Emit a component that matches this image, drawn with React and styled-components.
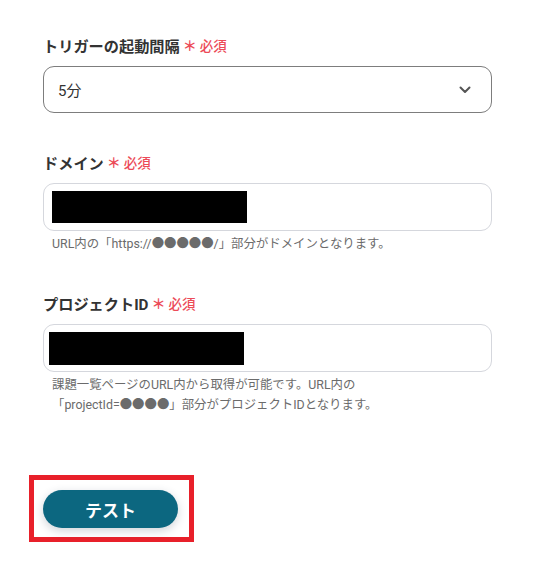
import React from "react";
import styled, { createGlobalStyle } from "styled-components";

const GlobalStyle = createGlobalStyle`
    body {
        margin: 0;
        background: #ffffff;
        font-family: Roboto, 'Noto Sans CJK JP', sans-serif;
    }
`

const Page = styled.div`
    width: 544px;
    height: 571px;
    box-sizing: border-box;
    padding: 34px 52px 0 43px;
    display: flex;
    flex-direction: column;
`

const Field = styled.div`
    display: flex;
    flex-direction: column;
    margin-bottom: ${props => props.gap}px;
`

const Label = styled.div`
    display: flex;
    align-items: center;
    height: 22px;
    margin-bottom: 10px;
    font-size: 15.2px;
    font-weight: 700;
    color: #333333;
    span{
        margin-left: 3px;
        font-size: 13.5px;
        font-weight: 500;
        color: #ec4b58;
    }
    b{
        font-size: 14px;
        font-weight: 700;
        margin-right: 3px;
    }
`

const Select = styled.div`
    height: 47px;
    box-sizing: border-box;
    border: 1px solid #7d7d7d;
    border-radius: 11px;
    display: flex;
    align-items: center;
    justify-content: space-between;
    padding: 0 20px 0 14px;
    font-size: 15px;
    color: #333333;
`

const Input = styled.div`
    height: 48px;
    box-sizing: border-box;
    border: 1px solid #d5d7dd;
    border-radius: 11px;
    display: flex;
    align-items: center;
    padding-left: ${props => props.pad}px;
`

const Redact = styled.div`
    width: 195px;
    height: ${props => props.h}px;
    background: #000000;
`

const Help = styled.div`
    margin-top: 3px;
    padding-left: 9px;
    font-size: 12.4px;
    line-height: 20px;
    color: #6b6b6b;
`

const Marker = styled.div`
    align-self: flex-start;
    margin-left: -14px;
    border: 5px solid #e8202a;
    padding: 10px 11px 9px 9px;
`

const TestButton = styled.button`
    width: 135px;
    height: 38px;
    border: none;
    border-radius: 19px;
    background: #0c6780;
    color: #ffffff;
    font-family: 'Noto Sans CJK JP', sans-serif;
    font-size: 17px;
    font-weight: 700;
    box-shadow: 0 3px 10px rgba(40, 60, 80, 0.22);
    display: block;
`

const Chevron = () => (
    <svg width="12" height="8" viewBox="0 0 12 8">
        <path d="M1.5 1.5 L6 6 L10.5 1.5" fill="none" stroke="#555" strokeWidth="2" strokeLinecap="round" strokeLinejoin="round" />
    </svg>
)

const Required = () => <span><b>＊</b>必須</span>

const App = () => {
    return (
        <>
            <GlobalStyle />
            <Page>
                <Field gap={38}>
                    <Label>トリガーの起動間隔<Required /></Label>
                    <Select>
                        5分
                        <Chevron />
                    </Select>
                </Field>
                <Field gap={38}>
                    <Label>ドメイン<Required /></Label>
                    <Input pad={8}><Redact h={32} /></Input>
                    <Help>URL内の「https://●●●●●/」部分がドメインとなります。</Help>
                </Field>
                <Field gap={60}>
                    <Label>プロジェクトID<Required /></Label>
                    <Input pad={5}><Redact h={33} /></Input>
                    <Help>課題一覧ページのURL内から取得が可能です。URL内の<br />「projectId=●●●●」部分がプロジェクトIDとなります。</Help>
                </Field>
                <Marker>
                    <TestButton>テスト</TestButton>
                </Marker>
            </Page>
        </>
    )
}

export default App;
